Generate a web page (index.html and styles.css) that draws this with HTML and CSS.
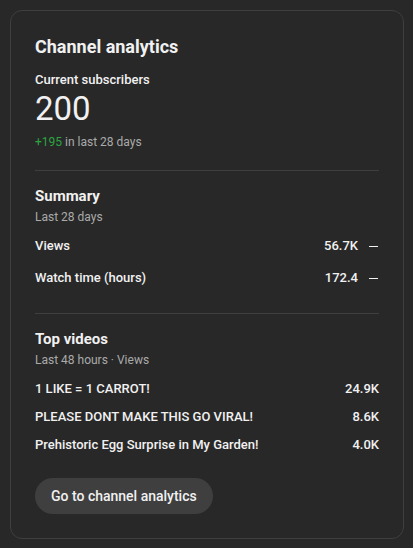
FILE: index.html
```html
<!DOCTYPE html>
<html>
<head>
<meta charset="utf-8">
<link rel="stylesheet" href="styles.css">
</head>
<body>
<div class="card">
  <h2 class="title">Channel analytics</h2>
  <div class="label">Current subscribers</div>
  <div class="big">200</div>
  <div class="sub"><span class="green">+195</span> in last 28 days</div>

  <div class="divider"></div>

  <section class="section">
    <h3 class="heading">Summary</h3>
    <div class="sub tight">Last 28 days</div>
    <div class="rows rows-summary">
      <div class="row"><span class="name">Views</span><span class="val">56.7K</span><span class="dash"></span></div>
      <div class="row"><span class="name">Watch time (hours)</span><span class="val">172.4</span><span class="dash"></span></div>
    </div>
  </section>

  <div class="divider divider-2"></div>

  <section class="section">
    <h3 class="heading">Top videos</h3>
    <div class="sub tight">Last 48 hours · Views</div>
    <div class="rows rows-videos">
      <div class="row"><span class="name">1 LIKE = 1 CARROT!</span><span class="val">24.9K</span></div>
      <div class="row"><span class="name">PLEASE DONT MAKE THIS GO VIRAL!</span><span class="val">8.6K</span></div>
      <div class="row"><span class="name">Prehistoric Egg Surprise in My Garden!</span><span class="val">4.0K</span></div>
    </div>
  </section>

  <button class="btn">Go to channel analytics</button>
</div>
</body>
</html>
```

FILE: styles.css
```css
html, body {
  margin: 0;
  padding: 0;
  background: #282828;
}
body {
  padding: 10px 9px 10px 10px;
  font-family: Roboto, "Liberation Sans", Arial, sans-serif;
  color: #f1f1f1;
}
.card {
  border: 1px solid #3f3f3f;
  border-radius: 12px;
  padding: 24px 24px 24px 24px;
  background: #282828;
}
.title {
  margin: 0;
  font-size: 18px;
  line-height: 24px;
  font-weight: 700;
}
.label {
  margin-top: 11px;
  font-size: 13px;
  line-height: 20px;
  font-weight: 500;
}
.big {
  margin-top: 1px;
  font-size: 33px;
  line-height: 36px;
  font-weight: 400;
}
.sub {
  margin-top: 6px;
  font-size: 12px;
  line-height: 18px;
  color: #aaaaaa;
}
.sub.tight {
  margin-top: 2px;
}
.green {
  color: #2ba640;
}
.divider {
  height: 1px;
  background: #3f3f3f;
  margin-top: 19px;
}
.divider-2 {
  margin-top: 25px;
}
.section {
  padding-top: 15px;
}
.heading {
  margin: 0;
  font-size: 15px;
  line-height: 20px;
  font-weight: 700;
}
.rows {
  margin-top: 10px;
  display: flex;
  flex-direction: column;
}
.rows-summary {
  gap: 12px;
}
.rows-videos {
  gap: 8px;
}
.row {
  display: flex;
  align-items: center;
  font-size: 13px;
  line-height: 20px;
  font-weight: 500;
}
.name {
  flex: 1;
  white-space: nowrap;
}
.val {
  text-align: right;
}
.dash {
  width: 9px;
  height: 1px;
  background: #f1f1f1;
  margin-left: 11px;
  margin-right: 1px;
}
.btn {
  display: inline-flex;
  align-items: center;
  margin-top: 23px;
  height: 36px;
  padding: 0 16px;
  border: none;
  border-radius: 18px;
  background: #3f3f3f;
  color: #f1f1f1;
  font-family: Roboto, "Liberation Sans", Arial, sans-serif;
  font-size: 14px;
  font-weight: 500;
}
```
